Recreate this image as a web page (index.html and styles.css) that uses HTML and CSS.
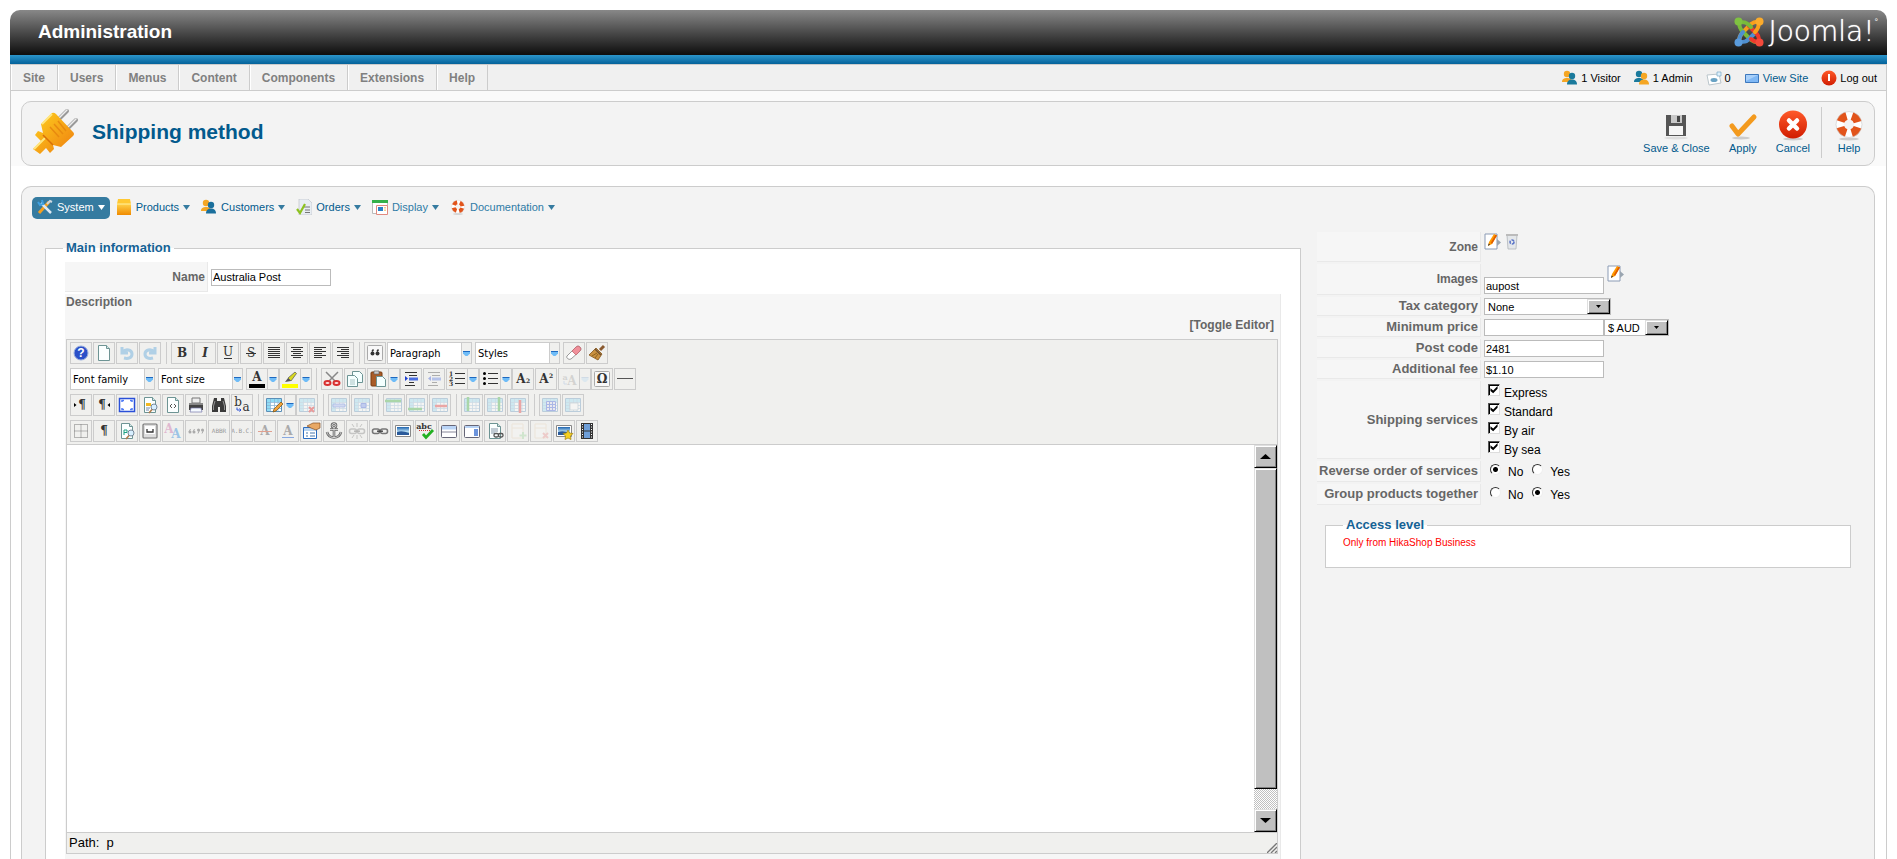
FILE: index.html
```html
<!DOCTYPE html>
<html lang="en">
<head>
    <meta charset="UTF-8">
    <meta name="viewport" content="width=device-width, initial-scale=1.0">
    <title>Administration - Shipping method</title>
    <link rel="stylesheet" href="styles.css">
</head>
<body>
    <!-- shared icons -->
    <svg class="defs" aria-hidden="true">
        <defs>
            <linearGradient id="g-orange" x1="0" y1="0" x2="0" y2="1"><stop offset="0" stop-color="#ffd24a"/><stop offset="1" stop-color="#f08a00"/></linearGradient>
            <linearGradient id="g-red" x1="0" y1="0" x2="0" y2="1"><stop offset="0" stop-color="#ff5a2a"/><stop offset="1" stop-color="#d01c00"/></linearGradient>
            <linearGradient id="g-plug" x1="0" y1="0" x2="1" y2="1"><stop offset="0" stop-color="#ffd21e"/><stop offset="1" stop-color="#ee7d10"/></linearGradient>
            <linearGradient id="g-sky" x1="0" y1="0" x2="0" y2="1"><stop offset="0" stop-color="#1d62ad"/><stop offset=".6" stop-color="#bfe4f7"/><stop offset="1" stop-color="#3a8f6a"/></linearGradient>
        </defs>
        <symbol id="people" viewBox="0 0 16 16">
            <circle cx="5" cy="4" r="3.2"/><path d="M0 12c0-3 2-4 5-4s5 1 5 4z"/>
            <g class="front"><circle cx="10" cy="6" r="3.2"/><path d="M5 14.500c0-3.500 2-5 5-5s5 1.500 5 5z"/></g>
        </symbol>
        <symbol id="buoy" viewBox="0 0 32 32">
            <ellipse cx="16" cy="30" rx="10" ry="1.500" fill="#ccc"/>
            <circle cx="16" cy="15.500" r="9" fill="none" stroke="#fff" stroke-width="8"/>
            <circle cx="16" cy="15.500" r="9" fill="none" stroke="#e2541b" stroke-width="8" stroke-dasharray="8.500 5.637" stroke-dashoffset="-2.800"/>
            <circle cx="16" cy="15.500" r="13" fill="none" stroke="#c9c9c9" stroke-width=".6"/>
        </symbol>
        <symbol id="doc" viewBox="0 0 20 20">
            <path d="M4.500 2.500h8l3 3v12h-11z" fill="#fbffff" stroke="#6d9494"/><path d="M12.500 2.500v3h3" fill="#d5e8e8" stroke="#6d9494"/>
        </symbol>
        <symbol id="pencil" viewBox="0 0 17 17">
            <path d="M1 1h12v15H1z" fill="#fff" stroke="#8b9bb5"/><path d="M13 6l4 3.500-4 3.500z" fill="#9aa5b0"/>
            <path d="M4 13l1-4 5-8 3 1.500-5 8.500z" fill="#f90"/><path d="M8 11l5-8.500-1.500-.8L7 9.500z" fill="#e05a00"/><path d="M4 13l.6-2.500 1.500 1z" fill="#333"/>
        </symbol>
        <symbol id="table" viewBox="0 0 20 20">
            <path d="M2.500 3.500h15v13h-15z" fill="#fff" stroke="#5a8fb8"/><path d="M3 4h14v3H3zM3 7h3v9H3z" fill="#8fdcf5"/>
            <path d="M6.500 4v12M10.500 4v12M14 4v12M3 7.500h14M3 10.500h14M3 13.500h14" stroke="#8db6d6" stroke-width=".8"/>
        </symbol>
        <symbol id="drop" viewBox="0 0 9 20">
            <path d="M1 8.500h7v2l-2.500 2.500h-2L1 10.500z" fill="#6fbcf7"/><path d="M1 8h7v1H1z" fill="#1e69c0"/>
        </symbol>
        <symbol id="down" viewBox="0 0 7 5"><path d="M0 0h7L3.500 5z"/></symbol>
        <symbol id="photo" viewBox="0 0 20 20">
            <path d="M2.500 4.500h15v11h-15z" fill="#fff" stroke="#888"/><path d="M4 6h12v8H4z" fill="url(#g-sky)"/><path d="M4 11q5-2 12 1v2H4z" fill="#2a5a9a"/>
        </symbol>
        <symbol id="chain" viewBox="0 0 20 20">
            <g fill="none" stroke="#777" stroke-width="1.600"><rect x="2.500" y="8" width="7" height="4.500" rx="2"/><rect x="10.500" y="8" width="7" height="4.500" rx="2"/></g><path d="M7 10.200h6" stroke="#444" stroke-width="1.400"/>
        </symbol>
        <symbol id="magnifier" viewBox="0 0 20 20">
            <circle cx="14" cy="12" r="3" fill="#d8efff" stroke="#789"/><path d="M12 14.500l-3 3.500" stroke="#b07a4a" stroke-width="1.600"/>
        </symbol>
    </svg>

    <header class="topbar">
        <span class="site-name">Administration</span>
        <div class="brand">
            <svg width="30" height="30" viewBox="0 0 30 30" fill="none" stroke-width="4" stroke-linecap="round">
                <path d="M25 25c0-6-2-8-5-11L9 5.500 5 5" stroke="#ee3a2c" stroke-width="0"/>
                <path d="M5 25c0-6 2-8 4-10l8-8q4-3 8-2" stroke="#f8a01c"/>
                <path d="M5 5c0 6 2 8 4 10l8 8q4 3 8 2" stroke="#78bb3a"/>
                <path d="M5 25c0-6 2-8 4-10M5 25c5 0 7 0 10-3l6-6" stroke="#4f8fd0"/>
                <path d="M25 25c0-6-1-7-4-10l-6-6M25 25c-4 0-6-1-8-3" stroke="#ee3a2c"/>
                <path d="M5 5c5 0 7 0 10 3l2 2" stroke="#78bb3a"/><path d="M25 5c0 5-1 7-4 10" stroke="#f8a01c"/>
                <g stroke="none"><circle cx="4.500" cy="4.500" r="4" fill="#7fc241"/><circle cx="25.500" cy="4.500" r="4" fill="#fbab2b"/><circle cx="4.500" cy="25.500" r="4" fill="#5a9bdc"/><circle cx="25.500" cy="25.500" r="4" fill="#f44a3c"/></g>
            </svg>
            <span class="brand-name">Joomla!</span><span class="brand-reg">°</span>
        </div>
    </header>
    <div class="stripe"></div>

    <div class="page">
        <div class="menubar">
            <nav class="menu">
                <a href="#">Site</a>
                <a href="#">Users</a>
                <a href="#">Menus</a>
                <a href="#">Content</a>
                <a href="#">Components</a>
                <a href="#">Extensions</a>
                <a href="#">Help</a>
            </nav>
            <div class="status">
                <span><svg class="icon swap"><use href="#people"/></svg>1 Visitor</span>
                <span><svg class="icon people"><use href="#people"/></svg>1 Admin</span>
                <span><svg class="icon" viewBox="0 0 16 16"><path d="M1 5l12-1 2 9-12 2z" fill="#fff" stroke="#bbc6cc"/><ellipse cx="8" cy="10" rx="3.500" ry="2" fill="#6aa3c4"/><path d="M11 2h4v4h-4z" fill="#dff0fa" stroke="#78aac8" stroke-width=".7"/></svg>0</span>
                <a href="#"><svg class="icon" viewBox="0 0 16 16"><path d="M1.500 4.500h13v8h-13z" fill="#7fb8f5" stroke="#3d78bd"/><path d="M2 5h12L2 11z" fill="#a8d0fa"/></svg>View Site</a>
                <a href="#" class="logout"><svg class="icon" viewBox="0 0 16 16"><circle cx="8" cy="8" r="7.500" fill="url(#g-red)"/><path d="M8 4v7" stroke="#fff" stroke-width="2"/></svg>Log out</a>
            </div>
        </div>

        <div class="head-wrap">
            <div class="head">
                <svg class="plug" width="48" height="48" viewBox="0 0 48 48">
                    <g stroke-linecap="round"><path d="M27 12l8-8M36 21l8-8" stroke="#999" stroke-width="4"/><path d="M27 11l8-8M36 20l8-8" stroke="#eee" stroke-width="1.500"/></g>
                    <path d="M1 42l8-8-6-6 3-4 5 2-2-9L20 6q2-1 4 1l17 18q2 2 0 4L29 40l-8-2 1 4-4 4-4-5-6 6z" fill="url(#g-plug)"/>
                    <path d="M2 42l11-11M10 17L20 7" stroke="#ffe680" stroke-width="2" fill="none"/>
                    <path d="M18 20l9 10M22 17l9 10M26 14l8 10" stroke="#e88a10" stroke-width="1.500"/><path d="M11 28l10 10" stroke="#d86f08" stroke-width="1.500"/>
                </svg>
                <h2>Shipping method</h2>
                <div class="actions">
                    <a href="#"><svg viewBox="0 0 32 32"><ellipse cx="16" cy="29" rx="12" ry="1.500" fill="#ddd"/><path d="M6 6h20v21H6z" fill="#555"/><path d="M11 6h11v8H11z" fill="#c8c8c8"/><path d="M17 7h3v6h-3z" fill="#444"/><path d="M9 17h14v9H9z" fill="#f5f5f5"/></svg>Save &amp; Close</a>
                    <a href="#"><svg viewBox="0 0 32 32"><ellipse cx="14" cy="29" rx="9" ry="1.500" fill="#ccc"/><path d="M5 17l6 8L27 8" fill="none" stroke="#f39a1e" stroke-width="5" stroke-linejoin="round" stroke-linecap="round"/></svg>Apply</a>
                    <a href="#"><svg viewBox="0 0 32 32"><ellipse cx="16" cy="30" rx="10" ry="1.500" fill="#ccc"/><circle cx="16" cy="15.500" r="14" fill="url(#g-red)"/><path d="M12 11.500l8 8M20 11.500l-8 8" stroke="#fff" stroke-width="4.500" stroke-linecap="round"/></svg>Cancel</a>
                    <i class="split-line"></i>
                    <a href="#"><svg><use href="#buoy"/></svg>Help</a>
                </div>
            </div>
        </div>

        <main class="box">
            <nav class="submenu">
                <a href="#" class="active"><svg class="icon" viewBox="0 0 16 16"><path d="M2 14L12 3" stroke="#f4a020" stroke-width="3"/><path d="M4 4l10 10" stroke="#dfe9f2" stroke-width="2.500"/><path d="M1 3l2 3 3-1-1-4" fill="none" stroke="#3fa0e0" stroke-width="2"/><path d="M10 5l3-3 2 1" stroke="#cfd8e0" stroke-width="2" fill="none"/></svg>System<svg class="down"><use href="#down"/></svg></a>
                <a href="#"><svg class="icon" viewBox="0 0 16 16"><path d="M2 0h12l1 5H1z" fill="#ffc832"/><path d="M1 5h14v11H1z" fill="url(#g-orange)"/><path d="M1 5h14" stroke="#fff0a0"/></svg>Products<svg class="down"><use href="#down"/></svg></a>
                <a href="#"><svg class="icon people alt"><use href="#people"/></svg>Customers<svg class="down"><use href="#down"/></svg></a>
                <a href="#"><svg class="icon" viewBox="0 0 16 16"><path d="M3 0h9l4 4v12H3z" fill="#e8edf2" stroke="#b8bec4" stroke-width=".6"/><path d="M7 8h7M9 11h5M9 13.500h5" stroke="#777"/><path d="M1 10l3 4 5-9" fill="none" stroke="#8dc21f" stroke-width="2.200"/></svg>Orders<svg class="down"><use href="#down"/></svg></a>
                <a href="#" class="light"><svg class="icon" viewBox="0 0 16 16"><path d="M.5 1.500h15v13H.5z" fill="#fff" stroke="#bbb"/><path d="M0 1h16v3H0z" fill="#35b04a"/><path d="M4.500 6.500h11v9h-11z" fill="#fff" stroke="#e08a80"/><path d="M6 8h5v4H6z" fill="#2a80c8"/><path d="M13 8v5" stroke="#e8a020" stroke-dasharray="1.500 1"/></svg>Display<svg class="down"><use href="#down"/></svg></a>
                <a href="#" class="light"><svg class="icon"><use href="#buoy"/></svg>Documentation<svg class="down"><use href="#down"/></svg></a>
            </nav>

            <div class="columns">
                <fieldset class="main-info">
                    <legend>Main information</legend>
                    <table class="form wide">
                        <tr>
                            <td class="key"><label for="name">Name</label></td>
                            <td><input type="text" id="name" value="Australia Post"></td>
                        </tr>
                        <tr>
                            <td class="editor-cell" colspan="2">
                                <label for="description">Description</label>
                                <a href="#" class="toggle">[Toggle Editor]</a>
                                <div class="editor">
                                    <div class="tools">
                                        <div class="row">
                                            <button title="Help"><svg viewBox="0 0 20 20"><circle cx="10" cy="10" r="7" fill="#2b50c8" stroke="#99aede"/><text x="10" y="14" class="t white">?</text></svg></button>
                                            <button title="New document"><svg><use href="#doc"/></svg></button>
                                            <button title="Undo" class="off"><svg viewBox="0 0 20 20"><path d="M5 4v6h6M6 9c3-4 9-2 9 2s-4 5-8 4" fill="none" stroke="#3a95d8" stroke-width="3"/></svg></button>
                                            <button title="Redo" class="off"><svg viewBox="0 0 20 20"><path d="M15 4v6H9M14 9c-3-4-9-2-9 2s4 5 8 4" fill="none" stroke="#3a95d8" stroke-width="3"/></svg></button>
                                            <i class="sep"></i>
                                            <button title="Bold"><svg viewBox="0 0 20 20"><text x="10" y="14" class="t">B</text></svg></button>
                                            <button title="Italic"><svg viewBox="0 0 20 20"><text x="10" y="14" class="t italic">I</text></svg></button>
                                            <button title="Underline"><svg viewBox="0 0 20 20"><text x="10" y="13" class="t plain">U</text><path d="M6 15.500h8" stroke="#333"/></svg></button>
                                            <button title="Strikethrough"><svg viewBox="0 0 20 20"><text x="10" y="14" class="t plain">S</text><path d="M5 10.500h10" stroke="#333"/></svg></button>
                                            <button title="Justify"><svg viewBox="0 0 20 20"><path d="M4 4.500h12M4 6.500h12M4 8.500h12M4 10.500h12M4 12.500h12M4 14.500h12" stroke="#333"/></svg></button>
                                            <button title="Align center"><svg viewBox="0 0 20 20"><path d="M4 4.500h12M6 6.500h8M4 8.500h12M6 10.500h8M4 12.500h12M6 14.500h8" stroke="#333"/></svg></button>
                                            <button title="Align left"><svg viewBox="0 0 20 20"><path d="M4 4.500h12M4 6.500h8M4 8.500h12M4 10.500h8M4 12.500h12M4 14.500h8" stroke="#333"/></svg></button>
                                            <button title="Align right"><svg viewBox="0 0 20 20"><path d="M4 4.500h12M8 6.500h8M4 8.500h12M8 10.500h8M4 12.500h12M8 14.500h8" stroke="#333"/></svg></button>
                                            <i class="sep"></i>
                                            <button title="Blockquote"><svg viewBox="0 0 20 20"><rect x="2.500" y="2.500" width="15" height="15" rx="1" fill="#f8f8f8" stroke="#aaa"/><path d="M8.500 6.500l-1.500 2M13.500 6.500l-1.500 2" stroke="#333" stroke-width="1.500"/><circle cx="7.500" cy="10.500" r="2" fill="#333"/><circle cx="12.500" cy="10.500" r="2" fill="#333"/></svg></button>
                                            <span class="listbox"><select aria-label="Format"><option>Paragraph</option></select><svg><use href="#drop"/></svg></span>
                                            <span class="listbox"><select aria-label="Styles"><option>Styles</option></select><svg><use href="#drop"/></svg></span>
                                            <button title="Remove formatting"><svg viewBox="0 0 20 20"><path d="M3 13l9-9q2-2 4 0t0 4l-9 8q-2 1-3.500-.5T3 13z" fill="#fff" stroke="#999"/><path d="M8 8l4-4q2-2 4 0t0 4l-4 4z" fill="#f0909a" stroke="#c06a72" stroke-width=".8"/></svg></button>
                                            <button title="Clean up"><svg viewBox="0 0 20 20"><path d="M13 7l4-4" stroke="#8a5a30" stroke-width="3"/><path d="M9 5l6 6-4 6-9-5z" fill="#c89040" stroke="#85571c" stroke-width=".8"/><path d="M8 6l6 6" stroke="#705030" stroke-width="1.500"/><path d="M5 13l5-3M8 15l3-4" stroke="#805818" stroke-width=".8"/></svg></button>
                                        </div>
                                        <div class="row">
                                            <span class="listbox"><select aria-label="Font family"><option>Font family</option></select><svg><use href="#drop"/></svg></span>
                                            <span class="listbox"><select aria-label="Font size"><option>Font size</option></select><svg><use href="#drop"/></svg></span>
                                            <button title="Text color"><svg viewBox="0 0 20 20"><text x="10" y="12" class="t">A</text><path d="M2 15h16v4H2z"/></svg></button><button class="more" title="More colors"><svg><use href="#drop"/></svg></button>
                                            <button title="Background color"><svg viewBox="0 0 20 20"><path d="M8 9l7-6 1.500 1.500L11 12z" fill="#d8d820" stroke="#555" stroke-width=".7"/><path d="M8 9l3 3-6 1z" fill="#555"/><path d="M2 15h16v4H2z" fill="#ff0"/></svg></button><button class="more" title="More colors"><svg><use href="#drop"/></svg></button>
                                            <i class="sep"></i>
                                            <button title="Cut"><svg viewBox="0 0 20 20"><path d="M4 3l10 10M16 3L6 13" stroke="#888" stroke-width="1.500"/><g fill="#fdd" stroke="#d83030" stroke-width="2"><ellipse cx="5.500" cy="14" rx="3" ry="2"/><ellipse cx="14.500" cy="14" rx="3" ry="2"/></g></svg></button>
                                            <button title="Copy"><svg viewBox="0 0 20 20"><g fill="#f4ffff" stroke="#6d9494"><path d="M7.500 2.500h7l3 3v8h-10z"/><path d="M2.500 6.500h7l3 3v8h-10z"/></g><path d="M5 11h5M5 13h5M5 15h5" stroke="#aac4c4"/></svg></button>
                                            <button title="Paste"><svg viewBox="0 0 20 20"><rect x="3" y="3" width="11" height="14" rx="1" fill="#a85c28" stroke="#7a3c10"/><path d="M6 2h5v3H6z" fill="#ccc" stroke="#666" stroke-width=".7"/><path d="M8.500 7.500h6l3 3v7h-9z" fill="#f4ffff" stroke="#6d9494"/></svg></button><button class="more" title="Paste options"><svg><use href="#drop"/></svg></button>
                                            <button title="Indent"><svg viewBox="0 0 20 20"><path d="M4 3.500h12M8 6.500h8M8 13.500h5M4 16.500h10" stroke="#333"/><path d="M8 8.500h9v3H8z" fill="#4a6ee0"/><path d="M4 7v5l3-2.500z" fill="#2040d0"/></svg></button>
                                            <button title="Outdent" class="off"><svg viewBox="0 0 20 20"><path d="M4 3.500h12M8 6.500h8M8 13.500h5M4 16.500h10" stroke="#333"/><path d="M8 8.500h9v3H8z" fill="#4a6ee0"/><path d="M7 7v5L4 9.500z" fill="#2040d0"/></svg></button>
                                            <button title="Numbered list"><svg viewBox="0 0 20 20"><path d="M8 4.500h10M8 9.500h10M8 14.500h10" stroke="#333"/><text x="4" y="7" class="t tiny">1</text><text x="4" y="12" class="t tiny">2</text><text x="4" y="17" class="t tiny">3</text></svg></button><button class="more" title="Numbering"><svg><use href="#drop"/></svg></button>
                                            <button title="Bullet list"><svg viewBox="0 0 20 20"><path d="M8 4.500h10M8 9.500h10M8 14.500h10" stroke="#333"/><circle cx="4.500" cy="4.500" r="1.500"/><circle cx="4.500" cy="9.500" r="1.500"/><circle cx="4.500" cy="14.500" r="1.500"/></svg></button><button class="more" title="Bullets"><svg><use href="#drop"/></svg></button>
                                            <button title="Subscript"><svg viewBox="0 0 20 20"><text x="8" y="14" class="t">A</text><text x="15" y="14" class="t tiny">2</text></svg></button>
                                            <button title="Superscript"><svg viewBox="0 0 20 20"><text x="8" y="14" class="t">A</text><text x="15" y="9" class="t tiny">2</text></svg></button>
                                            <button title="Text case" class="dim"><svg viewBox="0 0 20 20"><text x="6" y="11" class="t small">a</text><text x="13" y="16" class="t">A</text><path d="M5 12v3h3" fill="none" stroke="#26c"/></svg></button><button class="more dim" title="More"><svg><use href="#drop"/></svg></button>
                                            <button title="Special character"><svg viewBox="0 0 20 20"><rect x="2.500" y="2.500" width="15" height="15" rx="1" fill="#f8f8f8" stroke="#aaa"/><text x="10" y="14" class="t">Ω</text></svg></button>
                                            <button title="Horizontal rule"><svg viewBox="0 0 20 20"><path d="M2 9.500h16" stroke="#555"/></svg></button>
                                        </div>
                                        <div class="row">
                                            <button title="Left to right"><svg viewBox="0 0 20 20"><text x="11" y="14" class="t">¶</text><path d="M3 8l2.500 2L3 12z"/></svg></button>
                                            <button title="Right to left"><svg viewBox="0 0 20 20"><text x="8" y="14" class="t">¶</text><path d="M16 8l-2.500 2 2.500 2z"/></svg></button>
                                            <button title="Fullscreen"><svg viewBox="0 0 20 20"><path d="M2.500 3.500h15v13h-15z" fill="#fff" stroke="#2a50d8" stroke-width="1.500"/><path d="M5 7V5.500h2M13 5.500h2V7M15 13v1.500h-2M7 14.500H5V13" fill="none" stroke="#4d7af5" stroke-width="1.500"/></svg></button>
                                            <button title="Preview"><svg viewBox="0 0 20 20"><use href="#doc"/><path d="M6 8h5v3H6z" fill="#f2b820"/><path d="M6 13h4M6 15h3" stroke="#78a"/><use href="#magnifier"/></svg></button>
                                            <button title="Source code"><svg viewBox="0 0 20 20"><use href="#doc"/><path d="M9 9l-2 2 2 2M11 9l2 2-2 2" fill="none" stroke="#555"/></svg></button>
                                            <button title="Print"><svg viewBox="0 0 20 20"><path d="M6 3h8v5H6z" fill="#eee" stroke="#777"/><path d="M3 8h14v7H3z" fill="#444"/><path d="M3 8h14v2H3z" fill="#888"/><path d="M5 13h10l1 4H4z" fill="#f5faff" stroke="#77a" stroke-width=".7"/></svg></button>
                                            <button title="Find"><svg viewBox="0 0 20 20"><path d="M5 3h3v3h4V3h3l2 8v6h-6v-5H9v5H3v-6z" fill="#3a3a3a"/><path d="M4.500 15v-4L6 6M15.500 15v-4L14 6" fill="none" stroke="#aaa" stroke-width=".8"/></svg></button>
                                            <button title="Replace"><svg viewBox="0 0 20 20"><text x="6" y="11" class="t plain">b</text><text x="14" y="16" class="t plain">a</text><path d="M5 12.500v2.500h4M7.500 13.500L9 15l-1.500 1.500" fill="none" stroke="#2a50d8"/></svg></button>
                                            <i class="sep"></i>
                                            <button title="Insert table"><svg viewBox="0 0 20 20"><use href="#table"/><path d="M9 17l1-3 7-7 2 2-7 7z" fill="#f2a23a" stroke="#7a5010" stroke-width=".7"/></svg></button><button class="more" title="Table options"><svg><use href="#drop"/></svg></button>
                                            <button title="Delete table" class="off"><svg viewBox="0 0 20 20"><use href="#table"/><path d="M12 12l5 5M17 12l-5 5" stroke="#d00" stroke-width="2"/></svg></button>
                                            <i class="sep"></i>
                                            <button title="Row properties" class="off"><svg viewBox="0 0 20 20"><use href="#table"/><path d="M4 9h12v3H4z" fill="#9ab0f5" stroke="#2a50d8" stroke-width=".7"/></svg></button>
                                            <button title="Cell properties" class="off"><svg viewBox="0 0 20 20"><use href="#table"/><path d="M9 8.500h5v4H9z" fill="#6a8cf0" stroke="#2a50d8"/></svg></button>
                                            <i class="sep"></i>
                                            <button title="Insert row before" class="off"><svg viewBox="0 0 20 20"><use href="#table"/><path d="M1 6h16" stroke="#2aa82a" stroke-width="2.500"/></svg></button>
                                            <button title="Insert row after" class="off"><svg viewBox="0 0 20 20"><use href="#table"/><path d="M1 14h14" stroke="#2aa82a" stroke-width="2.500"/></svg></button>
                                            <button title="Delete row" class="off"><svg viewBox="0 0 20 20"><use href="#table"/><path d="M5 11h12" stroke="#e02020" stroke-width="2.500"/></svg></button>
                                            <i class="sep"></i>
                                            <button title="Insert column before" class="off"><svg viewBox="0 0 20 20"><use href="#table"/><path d="M6 2v14" stroke="#2aa82a" stroke-width="2.500"/></svg></button>
                                            <button title="Insert column after" class="off"><svg viewBox="0 0 20 20"><use href="#table"/><path d="M14 2v14" stroke="#2aa82a" stroke-width="2.500"/></svg></button>
                                            <button title="Delete column" class="off"><svg viewBox="0 0 20 20"><use href="#table"/><path d="M12 5v13" stroke="#e02020" stroke-width="2.500"/></svg></button>
                                            <i class="sep"></i>
                                            <button title="Split cells" class="off"><svg viewBox="0 0 20 20"><use href="#table"/><path d="M6.500 6.500h9v9h-9zM9.500 6v10M12.500 6v10M6 9.500h10M6 12.500h10" fill="#dde" stroke="#2a50d8"/></svg></button>
                                            <button title="Merge cells" class="off"><svg viewBox="0 0 20 20"><use href="#table"/><path d="M7 8h8v7H7z" fill="#fff" stroke="#79a" stroke-width=".7"/></svg></button>
                                        </div>
                                        <div class="row">
                                            <button title="Guidelines"><svg viewBox="0 0 20 20"><path d="M3.500 3.500h13v13h-13zM10 3.500v13M3.500 10h13" fill="none" stroke="#777" stroke-dasharray="1 1"/></svg></button>
                                            <button title="Show control characters"><svg viewBox="0 0 20 20"><text x="10" y="14" class="t">¶</text></svg></button>
                                            <button title="Page preview"><svg viewBox="0 0 20 20"><use href="#doc"/><path d="M7 14V9h3v2.500H7" fill="none" stroke="#1aa080"/><use href="#magnifier"/></svg></button>
                                            <button title="Nonbreaking space"><svg viewBox="0 0 20 20"><rect x="3" y="3" width="14" height="14" rx="1" fill="#ddd" stroke="#777" stroke-width="1.200"/><path d="M5 5h10v8H5z" fill="#fff"/><path d="M7 8v3h6V8" fill="none" stroke="#333" stroke-width="1.300"/></svg></button>
                                            <button title="Edit style"><svg viewBox="0 0 20 20"><text x="6" y="12" class="t pink">A</text><text x="13" y="17" class="t blue">A</text></svg></button>
                                            <button title="Citation"><svg viewBox="0 0 20 20"><g fill="#aaa"><circle cx="4" cy="11" r="1.500"/><circle cx="8" cy="11" r="1.500"/><circle cx="12.500" cy="9" r="1.500"/><circle cx="16.500" cy="9" r="1.500"/></g><path d="M3 11l1.500-3M7 11l1.500-3M13.500 9L12 12.500M17.500 9L16 12.500" stroke="#aaa"/></svg></button>
                                            <button title="Abbreviation"><svg viewBox="0 0 20 20"><text x="10" y="12" class="t abbr">ABBR</text></svg></button>
                                            <button title="Acronym"><svg viewBox="0 0 20 20"><text x="10" y="12" class="t abbr">A.B.C.</text></svg></button>
                                            <button title="Deletion"><svg viewBox="0 0 20 20"><text x="10" y="14" class="t grey">A</text><path d="M3 10.500h14" stroke="#e0a090"/></svg></button>
                                            <button title="Insertion"><svg viewBox="0 0 20 20"><text x="10" y="14" class="t grey">A</text><path d="M4 16.500h12" stroke="#88a8e0"/></svg></button>
                                            <button title="Attributes"><svg viewBox="0 0 20 20"><path d="M2.500 6.500h13v11h-13z" fill="#fff" stroke="#2a6cc0"/><path d="M3 7h12v3H3z" fill="#b8d4f0"/><path d="M5 12h2M5 15h2M9 12h5M9 15h5" stroke="#47a"/><path d="M6 5l6-3h7v5l-4 2-5-2z" fill="#e8a864" stroke="#8a5020" stroke-width=".7"/></svg></button>
                                            <button title="Anchor"><svg viewBox="0 0 20 20"><g fill="none" stroke="#666" stroke-width="2.600"><circle cx="10" cy="4.500" r="2"/><path d="M10 6.500V17M6 8.500h8M3 11c1 4 4 5.500 7 5.500s6-1.500 7-5.500"/></g><g fill="none" stroke="#ddd" stroke-width=".9"><circle cx="10" cy="4.500" r="2"/><path d="M10 6.500V17M6 8.500h8M3 11c1 4 4 5.500 7 5.500s6-1.500 7-5.500"/></g></svg></button>
                                            <button title="Unlink" class="off"><svg viewBox="0 0 20 20"><use href="#chain"/><path d="M10 2v4M10 14v4M5 3l2 3M15 3l-2 3M5 17l2-3M15 17l-2-3" stroke="#777"/></svg></button>
                                            <button title="Link"><svg><use href="#chain"/></svg></button>
                                            <button title="Image"><svg><use href="#photo"/></svg></button>
                                            <button title="Spellcheck"><svg viewBox="0 0 20 20"><text x="8" y="8" class="t small">abc</text><path d="M3 9.500h11" stroke="#c33" stroke-dasharray="1 1"/><path d="M7 13l3 3.500L17 9" fill="none" stroke="#22b022" stroke-width="2.800"/></svg></button>
                                            <button title="Pagebreak"><svg viewBox="0 0 20 20"><rect x="2.500" y="4.500" width="15" height="12" rx="1" fill="#fff" stroke="#667"/><path d="M3 5h14v3.500H3z" fill="#b9d4f6"/><path d="M3 11h14" stroke="#889"/></svg></button>
                                            <button title="Read more"><svg viewBox="0 0 20 20"><rect x="2.500" y="4.500" width="15" height="12" rx="1" fill="#fff" stroke="#667"/><path d="M3 5h14v2H3z" fill="#b9d4f6"/><path d="M12 8h4v7h-4z" fill="#6c94dc"/></svg></button>
                                            <button title="Article link"><svg viewBox="0 0 20 20"><use href="#doc"/><path d="M6 8h7M6 10h7M6 12h4" stroke="#89a"/><rect x="9" y="12.500" width="4.500" height="3.500" rx="1.500" fill="none" stroke="#555" stroke-width="1.300"/><rect x="13.500" y="12.500" width="4.500" height="3.500" rx="1.500" fill="none" stroke="#555" stroke-width="1.300"/></svg></button>
                                            <button title="Add layout" class="dim"><svg viewBox="0 0 20 20"><path d="M4 3h11v14H4z" fill="#fff" stroke="#da6"/><path d="M4 7h11" stroke="#da6"/><path d="M15 11v7M11.500 14.500h7" stroke="#2a2" stroke-width="2"/></svg></button>
                                            <button title="Remove layout" class="dim"><svg viewBox="0 0 20 20"><path d="M4 3h11v14H4z" fill="#fff" stroke="#da6"/><path d="M4 7h11" stroke="#da6"/><path d="M12 12l5 5M17 12l-5 5" stroke="#d00" stroke-width="2"/></svg></button>
                                            <button title="Image manager"><svg viewBox="0 0 20 20"><use href="#photo"/><path d="M14 9l1.500 3 3.500.5-2.500 2.500.5 3.500-3-1.500-3 1.500.5-3.500L9 12.500l3.500-.5z" fill="#f5d020" stroke="#a08010" stroke-width=".7"/></svg></button>
                                            <button title="Media"><svg viewBox="0 0 20 20"><path d="M4 2h12v16H4z" fill="#333"/><path d="M7 3h6v6.500H7zM7 10.500h6V17H7z" fill="#6f9fd8"/><path d="M5.500 3v14M14.500 3v14" stroke="#fff" stroke-dasharray="1 1.500"/></svg></button>
                                        </div>
                                    </div>
                                    <div class="edit-area">
                                        <textarea id="description"></textarea>
                                        <div class="scroll" aria-hidden="true">
                                            <span class="bevel"><svg width="11" height="5" viewBox="0 0 11 5"><path d="M0 5L5.500 0 11 5z"/></svg></span>
                                            <span class="bevel thumb"></span>
                                            <span class="track"></span>
                                            <span class="bevel"><svg width="11" height="5" viewBox="0 0 11 5"><path d="M0 0h11L5.500 5z"/></svg></span>
                                        </div>
                                    </div>
                                    <div class="path">
                                        <span>Path: &nbsp;p</span>
                                        <svg width="10" height="10" viewBox="0 0 10 10"><path d="M0 10L10 0M4 10l6-6M8 10l2-2" stroke="#777" stroke-width="1.300"/></svg>
                                    </div>
                                </div>
                            </td>
                        </tr>
                    </table>
                </fieldset>

                <div class="side">
                    <table class="form">
                        <tr class="zone">
                            <td class="key">Zone</td>
                            <td>
                                <div class="pair wide-gap">
                                    <button title="Edit zone"><svg width="17" height="17"><use href="#pencil"/></svg></button>
                                    <button title="Delete zone"><svg width="12" height="17" viewBox="0 0 12 17"><path d="M1 2h10l-1 14H2z" fill="#e4e7ea" stroke="#b0b5ba" stroke-width=".8"/><path d="M0 1h12v2H0z" fill="#bbb"/><circle cx="6" cy="9" r="2" fill="none" stroke="#5a74c8" stroke-width="1.500" stroke-dasharray="3 1"/></svg></button>
                                </div>
                            </td>
                        </tr>
                        <tr class="images">
                            <td class="key"><label for="images">Images</label></td>
                            <td>
                                <div class="pair">
                                    <input type="text" id="images" value="aupost">
                                    <button title="Edit images"><svg width="17" height="17"><use href="#pencil"/></svg></button>
                                </div>
                            </td>
                        </tr>
                        <tr>
                            <td class="key big"><label for="tax">Tax category</label></td>
                            <td><span class="combo tax"><select id="tax"><option>None</option></select><span class="bevel"><svg width="5" height="3" viewBox="0 0 5 3"><path d="M0 0h5L2.500 3z"/></svg></span></span></td>
                        </tr>
                        <tr>
                            <td class="key big"><label for="min-price">Minimum price</label></td>
                            <td><div class="joined"><input type="text" id="min-price"><span class="combo"><select aria-label="Currency"><option>$ AUD</option></select><span class="bevel"><svg width="5" height="3" viewBox="0 0 5 3"><path d="M0 0h5L2.500 3z"/></svg></span></span></div></td>
                        </tr>
                        <tr>
                            <td class="key big"><label for="post-code">Post code</label></td>
                            <td><input type="text" id="post-code" value="2481"></td>
                        </tr>
                        <tr>
                            <td class="key big"><label for="fee">Additional fee</label></td>
                            <td><input type="text" id="fee" value="$1.10"></td>
                        </tr>
                        <tr>
                            <td class="key big">Shipping services</td>
                            <td>
                                <label class="check"><input type="checkbox" checked>Express</label>
                                <label class="check"><input type="checkbox" checked>Standard</label>
                                <label class="check"><input type="checkbox" checked>By air</label>
                                <label class="check"><input type="checkbox" checked>By sea</label>
                            </td>
                        </tr>
                        <tr>
                            <td class="key big">Reverse order of services</td>
                            <td>
                                <div class="radios">
                                    <label><input type="radio" name="reverse" checked>No</label>
                                    <label><input type="radio" name="reverse">Yes</label>
                                </div>
                            </td>
                        </tr>
                        <tr>
                            <td class="key big">Group products together</td>
                            <td>
                                <div class="radios">
                                    <label><input type="radio" name="group">No</label>
                                    <label><input type="radio" name="group" checked>Yes</label>
                                </div>
                            </td>
                        </tr>
                    </table>
                    <fieldset class="access">
                        <legend>Access level</legend>
                        <p>Only from HikaShop Business</p>
                    </fieldset>
                </div>
            </div>
        </main>
    </div>
</body>
</html>
```

FILE: styles.css
```css
* {
    box-sizing: border-box;
}
body {
    margin: 0;
    padding: 10px 10px 0;
    height: 100vh;
    overflow: hidden;
    display: flex;
    flex-direction: column;
    font-family: "Liberation Sans", Arial, sans-serif;
    font-size: 11px;
    color: #000;
    background: #fff;
}
a {
    color: #025a8d;
    text-decoration: none;
}
.defs {
    position: absolute;
    width: 0;
    height: 0;
}
.icon {
    width: 16px;
    height: 16px;
    flex: none;
}

/* header */
.topbar {
    display: flex;
    flex: none;
    justify-content: space-between;
    align-items: center;
    height: 45px;
    padding: 0 9px 2px 28px;
    border-radius: 10px 10px 0 0;
    background: linear-gradient(#888, #4a4a4a 50%, #0d0d0d);
}
.site-name {
    font-size: 19px;
    font-weight: bold;
    color: #fff;
}
.brand {
    display: flex;
    align-items: center;
    color: #fff;
}
.brand-name {
    margin-left: 4px;
    font-family: "DejaVu Sans ExtraLight", "DejaVu Sans Light", "DejaVu Sans", sans-serif;
    font-weight: 200;
    font-size: 28px;
    line-height: 30px;
    text-shadow: 0 0 1px #fff;
}
.brand-reg {
    align-self: flex-start;
    font-size: 9px;
}
.stripe {
    flex: none;
    height: 9px;
    background: linear-gradient(#2b95cb, #04629a);
}
.page {
    flex: 1;
    display: flex;
    flex-direction: column;
    border: 1px solid #ccc;
    border-bottom: 0;
}

/* menu and status */
.menubar {
    display: flex;
    flex: none;
    justify-content: space-between;
    height: 26px;
    border-bottom: 1px solid #ccc;
    background: #f0f0f0;
}
.menu {
    display: flex;
}
.menu a {
    padding: 0 12px;
    border-right: 1px solid #ccc;
    box-shadow: inset 1px 0 #fff;
    font-size: 12px;
    font-weight: bold;
    line-height: 26px;
    color: #808080;
}
.status {
    display: flex;
    align-items: center;
    gap: 13px;
    padding-right: 9px;
}
.status > * {
    display: flex;
    align-items: center;
    gap: 3px;
}
.status .logout {
    color: #000;
}
.people {
    fill: #1a7a9c;
    color: #f5a623;
}
.swap {
    fill: #f5a623;
    color: #1a7a9c;
}
.people.alt {
    fill: #f5a623;
    color: #1a6f9c;
}
.front {
    fill: currentColor;
}

/* title and toolbar */
.head-wrap {
    flex: none;
    padding: 10px 11px 0 10px;
    background: #fafafa;
}
.head {
    display: flex;
    align-items: center;
    height: 65px;
    padding: 0 3px 3px 10px;
    border: 1px solid #ccc;
    border-radius: 10px;
    background: #f3f3f3;
}
.head h2 {
    margin: 0 0 0 12px;
    font-size: 21px;
    color: #025a8d;
}
.plug {
    align-self: flex-start;
    margin-top: 5px;
}
.actions {
    display: flex;
    align-items: center;
    margin-left: auto;
    gap: 5px;
}
.actions a {
    display: flex;
    flex-direction: column;
    align-items: center;
    padding: 0 6px;
    line-height: 14px;
}
.actions svg {
    width: 32px;
    height: 32px;
}
.split-line {
    width: 1px;
    height: 51px;
    background: #ccc;
}

/* content */
.box {
    flex: 1;
    margin: 20px 11px 0 10px;
    border: 1px solid #ccc;
    border-bottom: 0;
    border-radius: 10px 10px 0 0;
    background: #f3f3f3;
}
.submenu {
    display: flex;
    gap: 1px;
    padding: 10px 10px 0;
}
.submenu a {
    display: flex;
    align-items: center;
    gap: 4px;
    height: 22px;
    padding: 0 5px 2px;
    border-radius: 5px;
}
.submenu .light {
    color: #2e7ba6;
}
.submenu .active {
    background: #357ba0;
    color: #fff;
}
.down {
    width: 7px;
    height: 5px;
    fill: #357ba0;
}
.active .down {
    fill: #fff;
}
.columns {
    display: grid;
    grid-template-columns: minmax(0, 1fr) 540px;
    gap: 14px;
    padding: 11px 19px 0 23px;
}
fieldset {
    margin: 0;
    border: 1px solid #ccc;
    background: #fff;
}
legend {
    padding: 0 3px;
    font-size: 13px;
    font-weight: bold;
    line-height: 16px;
    color: #146295;
}
.main-info {
    margin-top: 10px;
    padding: 4px 17px 20px;
}
.form {
    border-spacing: 2px;
}
.wide {
    width: 100%;
}
.form td {
    padding: 1px;
}
.form .key {
    width: 143px;
    height: 30px;
    padding: 0 2px;
    border-right: 1px solid #e9e9e9;
    border-bottom: 1px solid #e9e9e9;
    background: #f6f6f6;
    font-size: 12px;
    font-weight: bold;
    text-align: right;
    white-space: nowrap;
    color: #666;
}
input[type="text"] {
    display: block;
    width: 120px;
    height: 17px;
    padding: 0 1px;
    border: 1px solid #bbb;
    background: #fff;
    font: 11px "Liberation Sans", Arial, sans-serif;
    color: #000;
}
.form .editor-cell {
    padding: 0 2px 10px 1px;
    border-right: 1px solid #e9e9e9;
    background: #f6f6f6;
    font-size: 12px;
    font-weight: bold;
    line-height: 16px;
    color: #666;
}
.toggle {
    display: block;
    margin: 7px 4px 6px;
    text-align: right;
    color: #666;
}

/* editor */
.editor {
    border: 1px solid #ccc;
    background: #f0f0ee;
}
.tools {
    border-bottom: 1px solid #ccc;
}
.row {
    display: flex;
    gap: 1px;
    padding: 2px 3px;
}
.row button {
    flex: none;
    width: 22px;
    height: 22px;
    padding: 0;
    border: 1px solid #ccc;
    background: #f0f0ee;
}
.row button svg {
    display: block;
    width: 20px;
    height: 20px;
}
.row .more {
    width: 12px;
    margin-left: -2px;
    margin-right: -1px;
}
.row .more svg {
    width: 10px;
}
.off svg {
    opacity: .35;
}
.dim svg {
    opacity: .15;
}
.sep {
    width: 1px;
    height: 22px;
    margin: 0 3px 0 4px;
    background: #ccc;
}
.listbox {
    display: flex;
    width: 85px;
    height: 22px;
    margin-right: 2px;
    border: 1px solid #ccc;
    background: #fff;
}
.listbox select {
    flex: 1;
    min-width: 0;
    padding: 0 2px;
    border: 0;
    appearance: none;
    background: #fff;
    font: 11px "DejaVu Sans Condensed", Tahoma, sans-serif;
    color: #000;
}
.listbox svg {
    width: 10px;
    height: 20px;
    border-left: 1px solid #ccc;
    background: #f0f0ee;
}
.t {
    font: bold 12px "DejaVu Serif", serif;
    text-anchor: middle;
    fill: #333;
}
.plain {
    font-weight: normal;
}
.white {
    fill: #fff;
    font-family: "Liberation Sans", sans-serif;
}
.italic {
    font-style: italic;
}
.tiny {
    font-size: 6px;
}
.small {
    font-size: 8px;
}
.abbr {
    font: 6px "DejaVu Sans Mono", monospace;
    fill: #999;
}
.grey {
    fill: #aaa;
}
.pink {
    fill: #e0b8d0;
}
.blue {
    fill: #9cc4e6;
}
.edit-area {
    display: flex;
    height: 387px;
    background: #fff;
}
.edit-area textarea {
    flex: 1;
    border: 0;
    outline: 0;
    resize: none;
    background: #fff;
}
.scroll {
    display: flex;
    flex-direction: column;
    width: 23px;
}
.bevel {
    display: flex;
    flex: none;
    align-items: center;
    justify-content: center;
    width: 23px;
    height: 23px;
    border: 1px solid;
    border-color: #dfdfdf #000 #000 #dfdfdf;
    background: #c0c0c0;
    box-shadow: inset 1px 1px #fff, inset -1px -1px #808080;
}
.thumb {
    flex: 1;
}
.track {
    height: 20px;
    background: repeating-conic-gradient(#c0c0c0 0 25%, #fff 0 50%) 0 0 / 2px 2px;
}
.path {
    display: flex;
    justify-content: space-between;
    height: 21px;
    padding-left: 2px;
    border-top: 1px solid #ccc;
    font-size: 13px;
    font-weight: normal;
    line-height: 20px;
    color: #000;
}
.path svg {
    align-self: flex-end;
}

/* right column */
.side .form .key {
    width: 162px;
}
.side .form .big {
    height: 19px;
    font-size: 13px;
    line-height: 18px;
}
.side .zone td {
    vertical-align: top;
}
.side .zone .key {
    vertical-align: middle;
}
.side .images .key {
    height: 31px;
}
.side button {
    display: block;
    padding: 0;
    border: 0;
    background: none;
}
.side button svg {
    display: block;
}
.pair {
    display: flex;
    gap: 3px;
    align-items: flex-start;
}
.wide-gap {
    gap: 5px;
}
.images .pair input {
    margin-top: 12px;
}
.joined {
    display: flex;
}
.combo {
    display: flex;
    width: 65px;
    height: 17px;
    border: 1px solid #bbb;
    background: #fff;
}
.tax {
    width: 127px;
}
.combo select {
    flex: 1;
    min-width: 0;
    padding: 0 3px;
    border: 0;
    appearance: none;
    background: #fff;
    font: 11px "Liberation Sans", Arial, sans-serif;
    color: #000;
}
.combo .bevel {
    height: 15px;
}
.check {
    display: flex;
    align-items: center;
    gap: 4px;
    height: 19px;
    padding: 2px 0 0 4px;
    font-size: 12px;
}
.check input {
    width: 12px;
    height: 12px;
    margin: 0 0 6px;
    border: 1px solid;
    border-color: #555 #ddd #ddd #555;
    appearance: none;
    background: #fff;
    box-shadow: inset 1px 1px #000;
}
.check input:checked::before {
    content: "";
    display: block;
    width: 8px;
    height: 8px;
    margin: 1px;
    background: #000;
    clip-path: polygon(6% 35%, 40% 62%, 95% 5%, 95% 40%, 40% 98%, 6% 68%);
}
.radios {
    display: flex;
    gap: 9px;
    padding: 2px 0 0 6px;
    font-size: 12px;
    line-height: 17px;
}
.radios label {
    display: flex;
    gap: 7px;
    align-items: center;
}
.radios input {
    width: 11px;
    height: 11px;
    margin: 0 0 6px;
    border: 1px solid;
    border-color: #333 #eee #eee #333;
    border-radius: 50%;
    appearance: none;
    background: #fff;
}
.radios input:checked {
    background: radial-gradient(circle, #000 2px, #fff 3px);
}
.access {
    margin: 10px 4px 0 10px;
    height: 51px;
    padding: 0 17px;
}
.access p {
    margin: 4px 0 0;
    font-size: 10px;
    line-height: 12px;
    color: #f00;
}
```
